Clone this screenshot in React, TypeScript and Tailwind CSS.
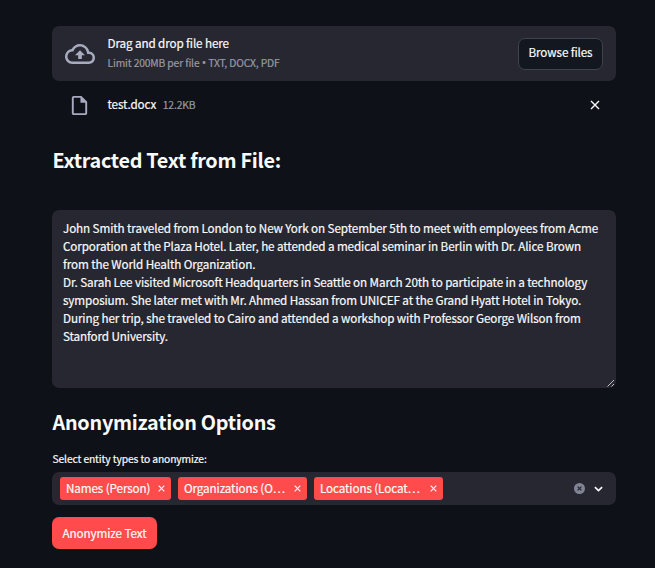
import { MdOutlineCloudUpload, MdOutlineInsertDriveFile } from "react-icons/md";

const paragraphs = [
  "John Smith traveled from London to New York on September 5th to meet with employees from Acme",
  "Corporation at the Plaza Hotel. Later, he attended a medical seminar in Berlin with Dr. Alice Brown",
  "from the World Health Organization.",
  "Dr. Sarah Lee visited Microsoft Headquarters in Seattle on March 20th to participate in a technology",
  "symposium. She later met with Mr. Ahmed Hassan from UNICEF at the Grand Hyatt Hotel in Tokyo.",
  "During her trip, she traveled to Cairo and attended a workshop with Professor George Wilson from",
  "Stanford University.",
];

function Cross({ className }: { className: string }) {
  return (
    <svg viewBox="0 0 10 10" className={className} fill="none" stroke="currentColor">
      <path d="M1 1L9 9M9 1L1 9" />
    </svg>
  );
}

function Tag({ label, width }: { label: string; width: string }) {
  return (
    <div className={`flex h-[23px] items-center justify-between rounded-[3px] bg-[#ff4b4b] pl-1.5 pr-[6px] ${width}`}>
      <span className="whitespace-nowrap pb-[3px] text-[11.7px] leading-[19px]">{label}</span>
      <Cross className="size-[7px] stroke-[1.6]" />
    </div>
  );
}

export default function App() {
  return (
    <main className="h-[568px] w-[655px] overflow-hidden bg-[#0e1117] pl-[52px] pr-[39px] pt-[26px] font-['Noto_Sans_CJK_SC',sans-serif] font-normal tracking-[-0.115px] text-[#fafafa] [-webkit-text-stroke:0.2px]">
      <section className="flex h-[55px] items-center rounded-[7px] bg-[#262730] pl-[13px] pr-[13px]">
        <MdOutlineCloudUpload className="size-[30px] text-[#a8abc0]" />
        <div className="ml-[12.5px] flex-1 whitespace-nowrap pb-[2px]">
          <div className="text-[11.7px] leading-[18px]">Drag and drop file here</div>
          <div className="pt-[2px] text-[10.3px] leading-[18px] tracking-[-0.14px] text-[#989aa3]">Limit 200MB per file <span className="font-['Open_Sans'] text-[12px] leading-none">•</span> TXT, DOCX, PDF</div>
        </div>
        <button className="h-8 w-[85px] whitespace-nowrap rounded-[7px] border border-[#41434c] bg-[#13171f] pb-[3px] text-[11.7px] leading-none">
          Browse files
        </button>
      </section>

      <div className="flex h-[48px] items-center pl-4 pr-4">
        <MdOutlineInsertDriveFile className="size-[23px] text-[#a8abc0]" />
        <span className="ml-[16.5px] pb-[2px] text-[11.7px]">test.docx</span>
        <span className="ml-[6.5px] flex-1 pb-px text-[10.3px] text-[#989aa3]">12.2KB</span>
        <Cross className="size-[10px] stroke-[1.4]" />
      </div>

      <h2 className="ml-[0.5px] mt-[14px] h-[67px] whitespace-nowrap text-[19.8px] font-bold leading-[34px] tracking-[-0.28px] [-webkit-text-stroke:0]">Extracted Text from File:</h2>

      <div className="relative h-[178px] rounded-[7px] bg-[#262730] pl-[11px] pt-[9px] text-[11.7px] leading-[18px]">
        {paragraphs.map((line) => (
          <div key={line} className="whitespace-nowrap">{line}</div>
        ))}
        <svg className="absolute bottom-[1px] right-[1px] size-2" viewBox="0 0 8 8" stroke="#d0d0d2" strokeWidth="0.9">
          <path d="M0.5 7.5L7 1M4.5 7.5L7 5" />
        </svg>
      </div>

      <h2 className="ml-[0.5px] mt-[17px] h-[46px] whitespace-nowrap text-[19.8px] font-bold leading-[34px] tracking-[-0.25px] [-webkit-text-stroke:0]">Anonymization Options</h2>

      <label className="ml-[0.5px] block h-[21px] text-[10.3px] leading-[16px] tracking-[-0.13px]">Select entity types to anonymize:</label>

      <div className="flex h-[33px] items-center gap-[7px] rounded-[7px] bg-[#262730] pl-2 pr-[13px]">
        <Tag label="Names (Person)" width="w-[111px]" />
        <Tag label="Organizations (O…" width="w-[129px]" />
        <Tag label="Locations (Locat…" width="w-[129px]" />
        <svg className="ml-auto mr-[2px] size-[11px]" viewBox="0 0 11 11" fill="none">
          <circle cx="5.5" cy="5.5" r="5.5" fill="#808495" />
          <path d="M3.6 3.6L7.4 7.4M7.4 3.6L3.6 7.4" stroke="#262730" strokeWidth="1.3" />
        </svg>
        <svg className="h-[6px] w-[9px]" viewBox="0 0 10 6" fill="none" stroke="currentColor" strokeWidth="1.8">
          <path d="M1 1L5 4.8L9 1" />
        </svg>
      </div>

      <button className="mt-3 h-8 w-[105px] whitespace-nowrap rounded-[7px] bg-[#ff4b4b] pb-px text-[11.7px] leading-none">Anonymize Text</button>
    </main>
  );
}
